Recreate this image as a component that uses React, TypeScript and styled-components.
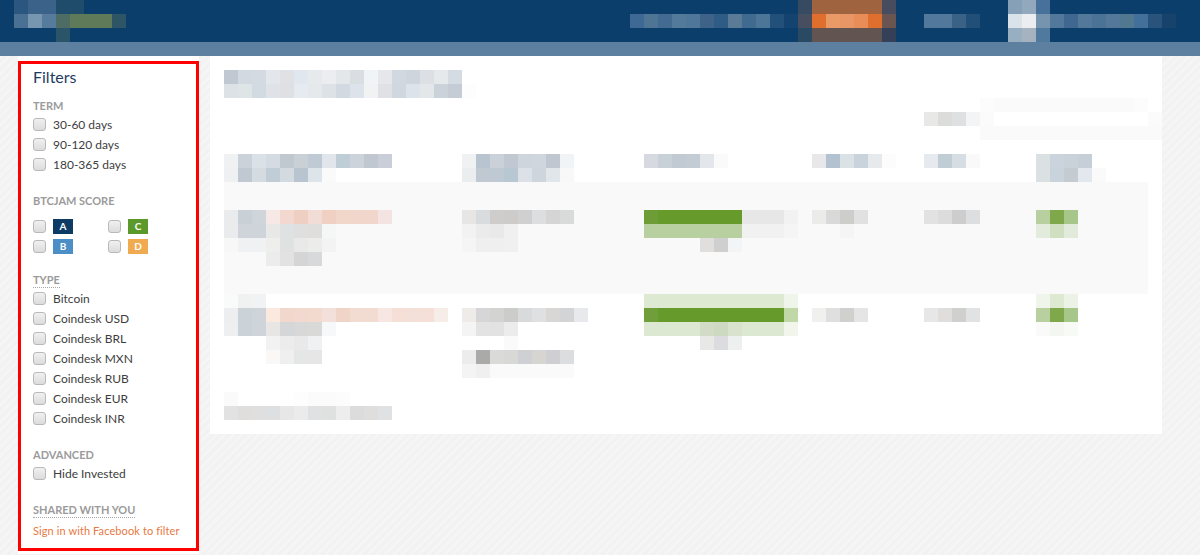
import React from "react";
import styled, { createGlobalStyle } from "styled-components";

const Global = createGlobalStyle`
  html, body {
    margin: 0;
    padding: 0;
    height: 100%;
    overflow: hidden;
  }
  body {
    font-family: Lato, "Open Sans", "Liberation Sans", sans-serif;
    background-color: #f3f3f3;
    background-image: repeating-linear-gradient(
      135deg,
      #f2f2f2 0px,
      #f2f2f2 3px,
      #f5f5f5 3px,
      #f5f5f5 6px
    );
  }
`;

/* ---------- pixelated (redacted) content ---------- */

const MosaicGrid = styled.div`
  display: flex;
  flex-direction: column;
  flex: none;
`;

const MosaicLine = styled.div`
  display: flex;
  height: 14px;
`;

const Tile = styled.span<{ $c: string }>`
  flex: none;
  width: 14px;
  height: 14px;
  background: ${(p) => p.$c};
`;

function Mosaic({ rows }: { rows: string[] }) {
  return (
    <MosaicGrid>
      {rows.map((r, i) => (
        <MosaicLine key={i}>
          {r
            .split(" ")
            .filter(Boolean)
            .map((c, j) => (
              <Tile key={j} $c={c === "-" ? "transparent" : "#" + c} />
            ))}
        </MosaicLine>
      ))}
    </MosaicGrid>
  );
}

/* ---------- header ---------- */

const Header = styled.header`
  height: 42px;
  background: #0c3e6b;
  display: flex;
  align-items: stretch;
  justify-content: space-between;
  padding: 0 24px 0 14px;
`;

const Logo = styled.div`
  display: flex;
  align-items: flex-start;
`;

const Nav = styled.nav`
  display: flex;
  align-items: center;
  gap: 28px;
`;

const NavGroup = styled.div`
  display: flex;
  align-items: center;
`;

const SubNav = styled.div`
  height: 14px;
  background: #5d80a0;
`;

/* ---------- page layout ---------- */

const Content = styled.div`
  display: flex;
  align-items: flex-start;
  gap: 11px;
  padding-left: 18px;
`;

const Sidebar = styled.aside`
  width: 181px;
  flex: none;
  background: #ffffff;
  padding: 5px 0 3px;
  box-sizing: border-box;
`;

const FilterBox = styled.div`
  border: 3px solid #ff0000;
  padding: 3px 0 7px 12px;
  display: flex;
  flex-direction: column;
  align-items: flex-start;
`;

const Title = styled.h2`
  margin: 0;
  font-size: 16px;
  line-height: 20px;
  font-weight: 400;
  color: #1e3c5e;
`;

const Section = styled.section<{ $mt: number }>`
  margin-top: ${(p) => p.$mt}px;
  display: flex;
  flex-direction: column;
  align-items: flex-start;
`;

const Heading = styled.h3<{ $dotted?: boolean }>`
  margin: 0;
  font-size: 11px;
  line-height: 14px;
  font-weight: 700;
  color: #9b9b9b;
  text-transform: uppercase;
  border-bottom: 1px dotted ${(p) => (p.$dotted ? "#a8a8a8" : "transparent")};
`;

const Option = styled.label`
  display: flex;
  align-items: center;
  gap: 7px;
  height: 20px;
  font-size: 12px;
  color: #3d3d3d;
  cursor: pointer;
`;

const Check = styled.input.attrs({ type: "checkbox" })`
  appearance: none;
  -webkit-appearance: none;
  margin: 0;
  width: 13px;
  height: 13px;
  box-sizing: border-box;
  border: 1px solid #b9b9b9;
  border-radius: 3px;
  background: linear-gradient(#f0f0f0, #dcdcdc);
  flex: none;
`;

const ScoreGrid = styled.div`
  margin-top: 7px;
  display: grid;
  grid-template-columns: 75px 75px;
`;

const Badge = styled.span<{ $bg: string }>`
  width: 20px;
  height: 15px;
  background: ${(p) => p.$bg};
  color: #ffffff;
  font-size: 10px;
  font-weight: 700;
  display: flex;
  align-items: center;
  justify-content: center;
`;

const FbLink = styled.a`
  margin-top: 3px;
  font-size: 11px;
  line-height: 20px;
  letter-spacing: 0.1px;
  color: #e8783f;
  text-decoration: none;
`;

/* ---------- main panel ---------- */

const Panel = styled.main`
  width: 952px;
  flex: none;
  background: #ffffff;
  padding: 14px;
  box-sizing: border-box;
`;

const Toolbar = styled.div`
  height: 42px;
  display: flex;
  justify-content: flex-end;
  align-items: center;
  margin: 0 -14px 14px 0;
`;

const TableRow = styled.div<{ $h: number; $pt?: number; $striped?: boolean }>`
  display: grid;
  grid-template-columns: 238px 182px 168px 112px 112px 1fr;
  height: ${(p) => p.$h}px;
  padding-top: ${(p) => p.$pt ?? 0}px;
  box-sizing: border-box;
  background: ${(p) => (p.$striped ? "#f9f9f9" : "transparent")};
`;

const Cell = styled.div`
  display: flex;
  align-items: flex-start;
`;

const Footer = styled.div`
  height: 28px;
`;

/* ---------- data ---------- */

const logoRows = [
  "2a5680 3b638a 3b638a 1f4c6a 1f4c6a",
  "4a7194 7796b0 577b9c 4d6d64 5e7a58 5e7a58 5e7a58 2d5566",
  "- - - 2a5468",
];

const navLinks = [
  "3e6994 4f7594 436a90 547a9a 4e7799 3f6388 2e5c84 5b7a96 406a90 4c7598 21507a 14436f",
];
const navButton = [
  "364b62 a0633f a0633f a0633f a0633f a0633f 474c5e",
  "474e60 e06f2e ea9a66 e89666 e88d58 e06f2e 6a5550",
  "2a4962 615451 615451 615451 615451 615451 334058",
];
const navItem = ["52789b 52789b 3a6287 214f77"];
const navUser = [
  "86a0b8 91a8bd 47719a",
  "dae2ea ebedf0 7694ae 52789b 3f6790 53789a 4a7395 53789a 527790 43709a 29537a 17426c",
  "98aec1 a6b2bf 4f7a9e",
];

const titleRows = [
  "c1c8d1 d2d9e0 d3dae1 e3e6ea dfe1e4 e1e7ee e6eaed ecedf0 e4e7ea d9dee3 f0f4f7 e5e7ea d1d8e0 ced5dd dce0e4 e6e9eb d4dbe2",
  "dde2e6 dfe4e7 d3dbe2 dfe3e7 dfe0e3 e6eaf1 e6e9eb dde2e6 d3d9e0 dce3ea f0f2f4 dfe1e5 d0d7df dce3ea e4e7ea cbd2da c5ccd6 fdfdfe",
];

const searchLabel = ["e8e8e6 dcdcdb dfe0e1 f3f4f6"];
const searchBox = [
  "fcfcfc fafafa fafafa fafafa fafafa fafafa fafafa fafafa fafafa fafafa fafafa fcfcfc",
  "fbfbfb - - - - - - - - - - - fbfbfb",
  "fafafa fafafa fafafa fafafa fafafa fafafa fafafa fafafa fafafa fafafa fafafa fafafa fafafa",
];

const headCells = [
  [
    "f0f1f2 cbd2da dae1e7 d4dbe2 c0c8d0 c9d0d6 c0cad4 e1e6ec bfcdd6 ccd3da c1c7d1 c9ced8",
    "eff0f1 c0c8d2 d4dce2 c1cdd6 d3dae0 b8c5d0 dde4ea fafafa",
  ],
  [
    "f0f1f2 b8c5d0 cad1d8 c1c8d2 ced5dd cfd6de c1c7d1 f0f4f7",
    "ebeeef c0c8d2 bec9d3 b8c8d2 dbe1e7 ced5dd e1e6eb f8f8f8",
  ],
  ["d6dae0 c8d0d8 c1c9d3 c3ccd5 e3e6ea fafafa"],
  ["e8e8ea b3c2d0 dbe2e5 c8d3dc e7eaed fcfcfc"],
  ["e6e9ed c1cdd5 d7dee3 f9f9f9"],
  [
    "dbe0e3 cbd4dc c9d1d9 c6cfd7",
    "dbe0e3 c8d3dc c4ccd2 e3e7ee fafafa",
  ],
];

const rowOne = [
  [
    "eaebed c9d1d6 cfd5da f6e9e5 f2d8ce f0cfc3 f1ddd5 f0d0c3 f1d6ca f0d6cb f0d6cb f3e4e1",
    "eaebed ced4d9 ced4d9 e8e8e6 e0e1e2 dfdfdf e0dedc f5f6f6",
    "f7f7f7 eff1f3 eff1f3 eeeeec e0e1e1 e9e9e9 ececea f3f3f3",
    "- - - ececec e2e2e2 d5d5d5 d8d9db",
  ],
  [
    "e8e6e4 d8dcdf cfcdcc cdcccb d0d0d0 dddedf d5d5d5 d9dada",
    "f2f2f2 ebebeb e9e9e9 f0f0f0",
    "f5f5f5 efefef efefef f0f0f0",
  ],
  [
    "6e9d38 669a2a 669a2a 669a2a 669a2a 669a2a 669a2a e8e7e7 e8e7e7 e8e7e7 f2f2f2",
    "b8cf9f b8cf9f b8cf9f b8cf9f b8cf9f b8cf9f b8cf9f f1f1f1 f1f1f1 f1f1f1 f5f5f5",
    "- - - - e0dfde cfcfcf f3f4f6",
  ],
  ["ebebea d9d9d9 cdcdcc e1e1e2", "- - f5f5f5"],
  ["e2e2e2 dcdcdc cdcdcd dddedf"],
  ["b8cf9f 7ea84a a7c78a", "e3ebdd d0dfc0 e2eadb"],
];

const rowTwo = [
  [
    "f9fafa f0f1f1 f0f2f3",
    "eceef0 cbd3d8 ced4d9 fbe9df f2d7cc f2d8ce f2dacf f3e0da f1d4c8 f2dcd1 f2dcd1 f7e6e1 f5dfd7 f3e0d8 f5dfd6 f7ede8",
    "eeeff1 cbd3d8 ced4d9 e8e6e4 d5d6d8 d8d8d8 d9d9d7 f6f8fa",
    "- - - f2f2f2 ececec e9e9e9 f0f1f3",
    "- - - f9f8f7 efefef e5e6e6 e6e6e6",
  ],
  [
    "",
    "eeebe9 d6d6d8 d3d3d1 ccccca d8dadb dfe0e2 d9d7d6 d3d4d6 e8e9ed",
    "f4f4f4 e3e3e3 e2e2e2 ececec",
    "- - - fafafa",
    "ececec aaaaa9 dadad9 d8d8d6 cfd0d4 d6d5d1 cfcfd3 dcdddf",
    "f4f4f4 f0f0f0 fafafa fafafa fafafa fafafa fafafa fafafa",
  ],
  [
    "dde9d1 dde9d1 dde9d1 dde9d1 dde9d1 dde9d1 dde9d1 dde9d1 dde9d1 dde9d1 eff5ea",
    "6f9e3b 669a2a 669a2a 669a2a 669a2a 669a2a 669a2a 669a2a 669a2a 669a2a c0d7a6",
    "dde8d2 dde8d2 dde8d2 dde8d2 d1dbc5 cdd9c1 d8e2cd dde8d2 dde8d2 dde8d2 f1f5ec",
    "- - - - e8e8e6 dcdce0 eef0f0",
  ],
  ["", "f0f0ef dfdfdf d0d0ce e5e5e6"],
  ["", "e7e7e7 dfdedd d0d0cf e1e2e3"],
  ["f0f5eb dde9d1 ecf2e6", "b8cf9f 7ea84a a7c78a", "fafbf8 f4f7f1 f8faf5"],
];

const footerRows = [
  "fafafa - - - - fdfdfd fbfbfb fbfbfb fcfcfc",
  "e2e2e2 dfdedd dfdfdf dedfe1 e7e7e7 ebebeb dfe1e2 dfe1e1 ededed dcdcdc dfdedd e0e1e3",
];

const terms = ["30-60 days", "90-120 days", "180-365 days"];
const scores: { l: string; c: string }[] = [
  { l: "A", c: "#0c3c66" },
  { l: "C", c: "#5b9a2a" },
  { l: "B", c: "#4b8fc6" },
  { l: "D", c: "#f0ab50" },
];
const types = [
  "Bitcoin",
  "Coindesk USD",
  "Coindesk BRL",
  "Coindesk MXN",
  "Coindesk RUB",
  "Coindesk EUR",
  "Coindesk INR",
];

function RowCells({ cells }: { cells: string[][] }) {
  return (
    <>
      {cells.map((rows, i) => (
        <Cell key={i}>
          <Mosaic rows={rows} />
        </Cell>
      ))}
    </>
  );
}

export default function App() {
  return (
    <>
      <Global />
      <Header>
        <Logo>
          <Mosaic rows={logoRows} />
        </Logo>
        <Nav>
          <NavGroup>
            <Mosaic rows={navLinks} />
            <Mosaic rows={navButton} />
          </NavGroup>
          <Mosaic rows={navItem} />
          <Mosaic rows={navUser} />
        </Nav>
      </Header>
      <SubNav />
      <Content>
        <Sidebar>
          <FilterBox>
            <Title>Filters</Title>

            <Section $mt={12}>
              <Heading>Term</Heading>
              {terms.map((t) => (
                <Option key={t}>
                  <Check />
                  {t}
                </Option>
              ))}
            </Section>

            <Section $mt={20}>
              <Heading>BTCJam Score</Heading>
              <ScoreGrid>
                {scores.map((s) => (
                  <Option key={s.l}>
                    <Check />
                    <Badge $bg={s.c}>{s.l}</Badge>
                  </Option>
                ))}
              </ScoreGrid>
            </Section>

            <Section $mt={17}>
              <Heading $dotted>Type</Heading>
              {types.map((t) => (
                <Option key={t}>
                  <Check />
                  {t}
                </Option>
              ))}
            </Section>

            <Section $mt={20}>
              <Heading>Advanced</Heading>
              <Option>
                <Check />
                Hide Invested
              </Option>
            </Section>

            <Section $mt={20}>
              <Heading $dotted>Shared with you</Heading>
              <FbLink href="#">Sign in with Facebook to filter</FbLink>
            </Section>
          </FilterBox>
        </Sidebar>

        <Panel>
          <Mosaic rows={titleRows} />
          <Toolbar>
            <Mosaic rows={searchLabel} />
            <Mosaic rows={searchBox} />
          </Toolbar>
          <TableRow $h={28}>
            <RowCells cells={headCells} />
          </TableRow>
          <TableRow $h={112} $pt={28} $striped>
            <RowCells cells={rowOne} />
          </TableRow>
          <TableRow $h={98}>
            <RowCells cells={rowTwo} />
          </TableRow>
          <Footer>
            <Mosaic rows={footerRows} />
          </Footer>
        </Panel>
      </Content>
    </>
  );
}
